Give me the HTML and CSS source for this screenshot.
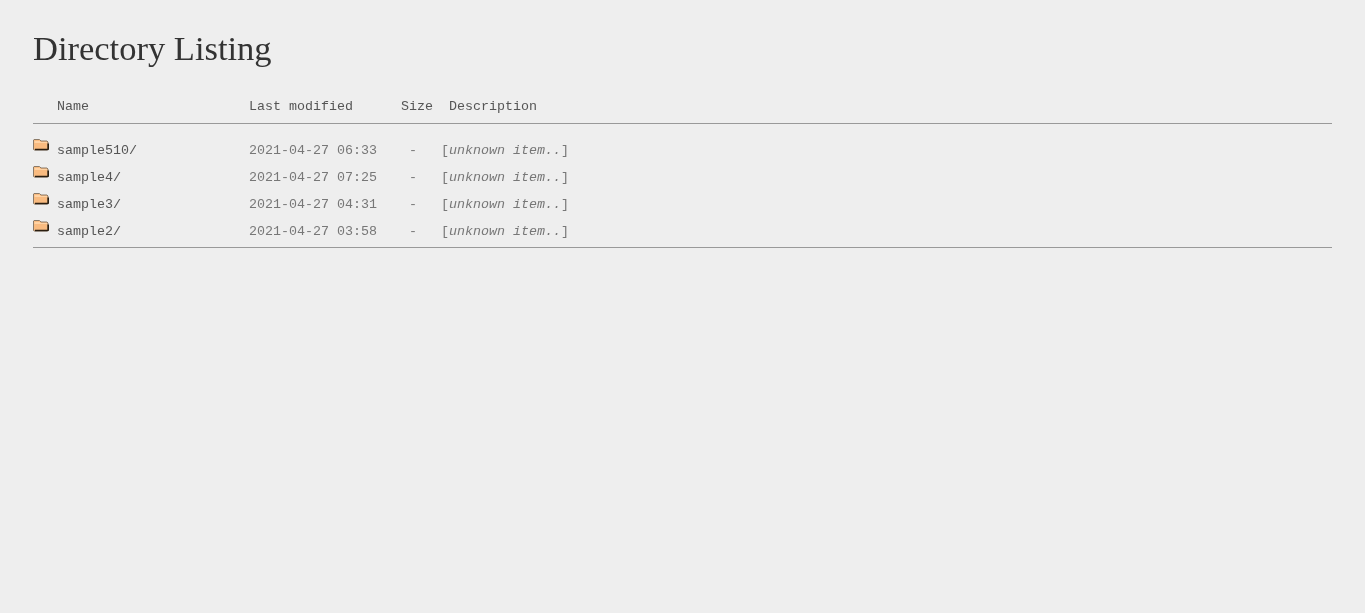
FILE: index.html

```html
<!DOCTYPE html>
<html lang="en">
<head>
  <meta charset="UTF-8">
  <title>Directory Listing</title>
  <link rel="stylesheet" href="styles.css">
</head>
<body>
<div class="container">
  <h1>Directory Listing</h1>

  <div class="row head">
    <span class="icon"></span>
    <a class="name">Name</a>
    <span class="meta">Last modified      Size  Description</span>
  </div>
  <hr class="rule-top">

  <div class="row">
    <span class="icon"><svg width="16" height="12" viewBox="0 0 16 12"><use href="#folder"/></svg></span>
    <a class="name">sample510/</a>
    <span class="meta">2021-04-27 06:33    -   [<em>unknown item..</em>]</span>
  </div>
  <div class="row">
    <span class="icon"><svg width="16" height="12" viewBox="0 0 16 12"><use href="#folder"/></svg></span>
    <a class="name">sample4/</a>
    <span class="meta">2021-04-27 07:25    -   [<em>unknown item..</em>]</span>
  </div>
  <div class="row">
    <span class="icon"><svg width="16" height="12" viewBox="0 0 16 12"><use href="#folder"/></svg></span>
    <a class="name">sample3/</a>
    <span class="meta">2021-04-27 04:31    -   [<em>unknown item..</em>]</span>
  </div>
  <div class="row">
    <span class="icon"><svg width="16" height="12" viewBox="0 0 16 12"><use href="#folder"/></svg></span>
    <a class="name">sample2/</a>
    <span class="meta">2021-04-27 03:58    -   [<em>unknown item..</em>]</span>
  </div>
  <hr class="rule-bottom">
</div>

<svg width="0" height="0" class="defs">
  <symbol id="folder" viewBox="0 0 16 12">
    <path d="M0.5 10.5V1L1 0.5H6.5L8 2H14L15 3V10.5L14.5 11H1Z" fill="#f9bb80" stroke="#8a7a68" stroke-width="1"/>
    <path d="M1.5 2.5H7M1.5 3.5H14" stroke="#ffd3a4" stroke-width="1"/>
    <path d="M2 10.5H14.5Q15.2 10.5 15.2 9.8V4.5" fill="none" stroke="#2a1e10" stroke-width="1.6"/>
  </symbol>
</svg>
</body>
</html>
```

FILE: styles.css

```css
body {
  font-family: "Liberation Mono", monospace;
  font-size: 13.333px;
  background-color: #eee;
  color: #555;
  margin: 0;
  padding: 0 33px;
}
/* own layer so the text gets plain grey antialiasing */
.container { will-change: opacity; }
h1 {
  font-family: "Liberation Serif", serif;
  font-weight: normal;
  font-size: 34.5px;
  line-height: 40px;
  color: #333;
  margin: 0;
  padding: 28px 0 29px;
}
.row {
  display: flex;
  height: 27px;
  line-height: 27px;
  white-space: pre;
}
.head { height: 20px; line-height: 20px; }
.icon { width: 24px; height: 16px; padding-top: 2px; }
.icon svg { display: block; }
.name { width: 192px; }
.meta { color: #777; }
.head .meta { color: #555; }
hr {
  border: none;
  border-top: 1px solid #999;
  margin: 0;
}
.rule-top { margin: 6px 0 13px; }
.rule-bottom { margin-top: 2px; }
.defs { position: absolute; }
```
